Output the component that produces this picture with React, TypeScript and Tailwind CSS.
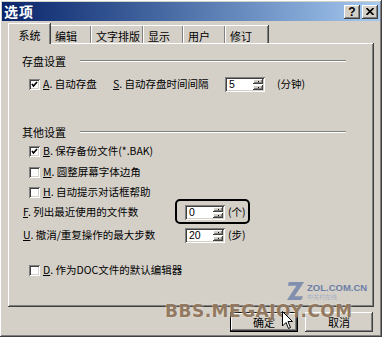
import React from "react";

const raised =
  "shadow-[inset_-1px_-1px_#404040,inset_1px_1px_#ffffff,inset_-2px_-2px_#808080,inset_2px_2px_#d4d0c8]";
const sunken =
  "shadow-[inset_1px_1px_#808080,inset_-1px_-1px_#ffffff,inset_2px_2px_#404040,inset_-2px_-2px_#d4d0c8]";

const font = "font-['SimSun','Noto_Sans_CJK_SC',sans-serif]";

function Check({ on }: { on?: boolean }) {
  return (
    <span className={`relative inline-block h-[11px] w-[11px] shrink-0 bg-white ${sunken}`}>
      {on && (
        <svg viewBox="0 0 11 11" className="absolute inset-0 h-[11px] w-[11px]">
          <path d="M3 5 L4.5 7 L8 3" fill="none" stroke="#000" strokeWidth="1.6" />
        </svg>
      )}
    </span>
  );
}

function Key({ k }: { k: string }) {
  return (
    <span>
      <span className="underline underline-offset-1">{k}</span>.
    </span>
  );
}

function Spin({ value }: { value: string }) {
  return (
    <div className={`flex h-[15px] w-[40px] bg-white ${sunken}`}>
      <span className="flex-1 pl-[4px] pt-[1px] text-[10.5px] leading-[13px] font-['Liberation_Sans',sans-serif]">
        {value}
      </span>
      <div className="mr-[2px] mt-[2px] flex h-[11px] w-[10px] flex-col gap-[1px]">
        <div className={`flex h-[5px] items-center justify-center bg-[#d4d0c8] ${raised}`}>
          <span className="h-[1px] w-[1px] bg-black" />
        </div>
        <div className={`flex h-[5px] items-center justify-center bg-[#d4d0c8] ${raised}`}>
          <span className="h-[1px] w-[1px] bg-black" />
        </div>
      </div>
    </div>
  );
}

function Group({ title }: { title: string }) {
  return (
    <div className="flex h-[16px] items-center pl-[14px] pr-[28px]">
      <span className="text-[11px]">{title}</span>
      <div className="ml-[14px] flex-1 border-t border-b border-t-[#808080] border-b-white" />
    </div>
  );
}

const tabs = [
  { t: "编辑", w: "w-[41px]" },
  { t: "文字排版", w: "w-[52px]" },
  { t: "显示", w: "w-[40px]" },
  { t: "用户", w: "w-[42px]" },
  { t: "修订", w: "w-[43px]" },
];

export default function App() {
  return (
    <div
      className={`relative h-[337px] w-[382px] overflow-hidden bg-[#d4d0c8] p-[2px] text-black ${font} ${raised}`}
    >
      {/* title bar */}
      <div className="flex h-[19px] items-center bg-gradient-to-r from-[#0a246a] to-[#a6caf0] pl-[2px] pr-[2px]">
        <span className="text-[14px] font-bold tracking-[1px] text-white">选项</span>
        <div className="ml-auto flex gap-[2px]">
          <span className={`flex h-[14px] w-[16px] items-center justify-center bg-[#d4d0c8] text-[12px] font-bold leading-none font-['Liberation_Sans',sans-serif] ${raised}`}>
            ?
          </span>
          <span className={`flex h-[14px] w-[16px] items-center justify-center bg-[#d4d0c8] ${raised}`}>
            <svg viewBox="0 0 8 7" className="h-[7px] w-[8px]">
              <path d="M0.5 0 L7.5 7 M7.5 0 L0.5 7" stroke="#000" strokeWidth="1.6" />
            </svg>
          </span>
        </div>
      </div>

      {/* tabs */}
      <div className="mt-[1px] flex h-[21px] items-end pl-[6px]">
        <div className="relative z-10 -mb-[1px] flex h-[21px] w-[42px] items-start justify-center border-l border-t border-white bg-[#d4d0c8] pt-[3px] text-[11px] shadow-[inset_-1px_0_#808080,1px_0_#404040]">
          系统
        </div>
        {tabs.map((t) => (
          <div
            key={t.t}
            className={`flex h-[18px] ${t.w} items-start border-l border-t border-white pl-[4px] pt-[2px] text-[11px] shadow-[inset_-1px_0_#808080,1px_0_#404040]`}
          >
            {t.t}
          </div>
        ))}
      </div>

      {/* panel */}
      <div
        className={`ml-[6px] flex h-[264px] w-[366px] flex-col pt-[10px] text-[10.5px] ${raised}`}
      >
        <Group title="存盘设置" />
        <div className="mt-[7px] flex h-[16px] items-center pl-[21px]">
          <Check on />
          <span className="ml-[3px] w-[70px]">
            <Key k="A" /> 自动存盘
          </span>
          <span className="w-[112px]">
            <Key k="S" /> 自动存盘时间间隔
          </span>
          <Spin value="5" />
          <span className="ml-[12px]">(分钟)</span>
        </div>

        <div className="mt-[32px]">
          <Group title="其他设置" />
        </div>
        <div className="mt-[3px] flex h-[16px] items-center pl-[21px]">
          <Check on />
          <span className="ml-[3px]">
            <Key k="B" /> 保存备份文件(*.BAK)
          </span>
        </div>
        <div className="mt-[5px] flex h-[16px] items-center pl-[21px]">
          <Check />
          <span className="ml-[3px]">
            <Key k="M" /> 圆整屏幕字体边角
          </span>
        </div>
        <div className="mt-[4px] flex h-[16px] items-center pl-[21px]">
          <Check />
          <span className="ml-[3px]">
            <Key k="H" /> 自动提示对话框帮助
          </span>
        </div>
        <div className="mt-[4px] flex h-[16px] items-center pl-[15px]">
          <span className="w-[162px]">
            <Key k="F" /> 列出最近使用的文件数
          </span>
          <div className="relative flex items-center">
            <span className="absolute -bottom-[4px] -left-[10px] -right-[4px] -top-[5px] rounded-[5px] border-2 border-black" />
            <Spin value="0" />
            <span className="ml-[3px]">(个)</span>
          </div>
        </div>
        <div className="mt-[7px] flex h-[16px] items-center pl-[15px]">
          <span className="w-[162px]">
            <Key k="U" /> 撤消/重复操作的最大步数
          </span>
          <Spin value="20" />
          <span className="ml-[3px]">(步)</span>
        </div>
        <div className="mt-[19px] flex h-[16px] items-center pl-[21px]">
          <Check />
          <span className="ml-[3px]">
            <Key k="D" /> 作为DOC文件的默认编辑器
          </span>
        </div>
      </div>

      {/* buttons */}
      <div className="mt-[5px] flex justify-end gap-[7px] pr-[7px]">
        <div className="border border-black">
          <div className={`flex h-[18px] w-[66px] items-center justify-center text-[11px] ${raised}`}>
            确定
          </div>
        </div>
        <div className={`flex h-[20px] w-[68px] items-center justify-center text-[11px] ${raised}`}>
          取消
        </div>
      </div>

      {/* watermark */}
      <div className="pointer-events-none absolute left-[286px] top-[280px] flex items-start gap-[2px]">
        <svg viewBox="0 0 20 22" className="h-[21px] w-[19px] opacity-80">
          <path d="M3 2 H19 L9 17 H18 L16 21 H1 L11 6 H2 Z" fill="#6f7fa8" />
        </svg>
        <div className="flex flex-col leading-none">
          <span className="mt-[3px] text-[9.5px] font-bold text-[#6c7ea6] font-['Liberation_Sans',sans-serif]">
            ZOL.COM.CN
          </span>
          <span className="mt-[1px] text-[6px] text-[#a8b0c4]">中关村在线</span>
        </div>
      </div>
      <div className="pointer-events-none absolute left-[165px] top-[303px] text-[17px] font-bold leading-none tracking-[0.5px] text-[#7a5c40]/80 font-['DejaVu_Sans',sans-serif] [text-shadow:0_0_2px_#f0e8dc]">
        BBS.MEGAJOY.COM
      </div>

      {/* cursor */}
      <svg viewBox="0 0 12 19" className="pointer-events-none absolute left-[282px] top-[311px] h-[19px] w-[12px]">
        <path d="M0.5 0.5 V15 L4 11.5 L6.5 17.5 L8.5 16.5 L6 10.5 H10.5 Z" fill="#fff" stroke="#000" strokeWidth="1" />
      </svg>
    </div>
  );
}
